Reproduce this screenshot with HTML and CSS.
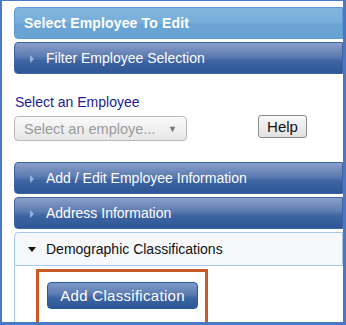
FILE: index.html
```html
<!DOCTYPE html>
<html>
<head>
<meta charset="utf-8">
<link rel="stylesheet" href="styles.css">
</head>
<body>
<div class="frame">
  <div class="panels">
    <div class="hdr hdr-light">Select Employee To Edit</div>
    <div class="hdr hdr-dark"><span class="tri"></span>Filter Employee Selection</div>
    <div class="select-area">
      <div class="label">Select an Employee</div>
      <div class="select-row">
        <div class="select"><span class="ph">Select an employe...</span><span class="arrow">▼</span></div>
        <button class="help">Help</button>
      </div>
    </div>
    <div class="hdr hdr-dark"><span class="tri"></span>Add / Edit Employee Information</div>
    <div class="hdr hdr-dark"><span class="tri"></span>Address Information</div>
    <div class="hdr hdr-open"><span class="tri-down"></span>Demographic Classifications</div>
    <div class="content">
      <div class="highlight">
        <button class="add">Add Classification</button>
      </div>
    </div>
  </div>
</div>
</body>
</html>
```
FILE: styles.css
```css
html, body { margin: 0; padding: 0; background: #fff; }
.frame {
  width: 346px; height: 325px; box-sizing: border-box;
  border-left: 2px solid #4a78c9; border-top: 1px solid #4a78c9;
  border-right: 3px solid #4a78c9; border-bottom: 3px solid #4a78c9;
  overflow: hidden; padding: 6px 0 0 12px;
  font-family: "Liberation Sans", Arial, sans-serif;
}
.panels { display: flex; flex-direction: column; }
.hdr {
  height: 32px; box-sizing: border-box; display: flex; align-items: center;
  color: #fff; font-size: 14px; border-radius: 4px 0 0 4px;
  margin-bottom: 3px;
}
.hdr-light {
  background: linear-gradient(#80b5de 0%, #78afdb 45%, #6aa4d5 55%, #69a3d4 100%);
  border: 1px solid #5e9bd1; font-weight: bold; padding-left: 9px;
  letter-spacing: 0.15px;
}
.hdr-dark {
  background: linear-gradient(#8a9fc9 0%, #5c7bb1 45%, #3d64a2 60%, #2d5797 100%);
  border: 1px solid #3e63a0; padding-left: 15px;
}
.tri {
  width: 0; height: 0; border-left: 4px solid #8fb4df;
  border-top: 4px solid transparent; border-bottom: 4px solid transparent;
  margin-right: 12px; margin-top: 2px;
}
.hdr-open {
  background: #f6f8fb; color: #111; border: 1px solid #a9c8e8;
  border-radius: 4px 0 0 0; padding-left: 13px; height: 34px; margin-bottom: 0;
}
.tri-down {
  width: 0; height: 0; border-top: 5px solid #111;
  border-left: 4px solid transparent; border-right: 4px solid transparent;
  margin-right: 10px; margin-top: 1px;
}
.select-area { padding: 17px 0 0 1px; height: 85px; box-sizing: border-box; }
.label { color: #1c1c96; font-size: 14px; line-height: 16px; }
.select-row { display: flex; align-items: flex-start; margin-top: 6px; }
.select {
  width: 173px; height: 25px; box-sizing: border-box;
  border: 1px solid #b9b9b9; border-radius: 4px;
  background: linear-gradient(#fafafa, #e6e6e6);
  display: flex; align-items: center; justify-content: space-between;
  padding: 0 9px 0 9px; margin-left: -1px;
}
.ph { color: #9a9a9a; font-size: 14.5px; }
.arrow { color: #777; font-size: 9px; }
.help {
  margin-left: 71px; margin-top: -1px; width: 49px; height: 23px;
  border: 1px solid #8a8a8a; border-radius: 3px;
  background: linear-gradient(#f8f8f8, #e2e2e2);
  font-family: "Liberation Sans", Arial, sans-serif; font-size: 15px; color: #111; padding: 0;
}
.content {
  border-left: 1px solid #a9c8e8; height: 70px; padding: 3px 0 0 21px;
}
.highlight {
  width: 172px; box-sizing: border-box; height: 60px;
  border: 3px solid #c95a27; padding: 10px 0 0 8px;
}
.add {
  width: 151px; height: 27px; border-radius: 4px; border: 1px solid #2d5797;
  background: linear-gradient(#7f9ac8 0%, #5c7bb1 45%, #3d64a2 60%, #2d5797 100%);
  color: #fff; font-family: "Liberation Sans", Arial, sans-serif; font-size: 15px; padding: 0;
  letter-spacing: 0.3px;
}
```
